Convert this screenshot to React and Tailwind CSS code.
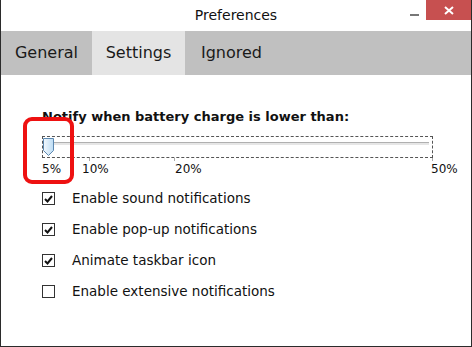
export default function App() {
  const items = [
    { label: "Enable sound notifications", checked: true },
    { label: "Enable pop-up notifications", checked: true },
    { label: "Animate taskbar icon", checked: true },
    { label: "Enable extensive notifications", checked: false },
  ];
  const font = { fontFamily: '"DejaVu Sans", Verdana, sans-serif' };
  return (
    <div className="w-[472px] h-[347px] bg-white border-x border-b border-[#2b2b2b] flex flex-col relative overflow-hidden" style={font}>
      <div className="h-[31px] flex items-center justify-center relative">
        <span className="text-[14px] text-[#111]">Preferences</span>
        <div className="absolute left-[409px] top-[14px] w-[9px] h-[2px] bg-[#777]" />
        <div className="absolute right-0 top-0 w-[45px] h-[20px] bg-[#c75050] flex items-center justify-center">
          <svg width="10" height="9" viewBox="0 0 10 9">
            <path d="M1 1 L9 8 M9 1 L1 8" stroke="white" strokeWidth="2" />
          </svg>
        </div>
      </div>
      <div className="h-[44px] bg-[#c0c0c0] flex text-[16px] text-[#1a1a1a]">
        <div className="w-[91px] flex items-center justify-center">General</div>
        <div className="w-[93px] bg-[#e4e4e4] flex items-center justify-center">Settings</div>
        <div className="w-[93px] flex items-center justify-center">Ignored</div>
      </div>
      <div className="pl-[41px] pt-[33px]">
        <div className="text-[13px] font-bold text-[#111] leading-[18px]">Notify when battery charge is lower than:</div>
        <div className="relative w-[391px] h-[22px] mt-[10px] border border-dashed border-[#555]">
          <div className="absolute left-[3px] right-[3px] top-[5px] h-[3px] bg-[#e6e6e6] border-t border-[#b0b0b0]" />
          <div className="absolute left-[46px] top-[21px] w-px h-[3px] bg-[#aaa]" />
          <div className="absolute left-[131px] top-[21px] w-px h-[3px] bg-[#aaa]" />
          <div className="absolute left-[389px] top-[21px] w-px h-[3px] bg-[#aaa]" />
          <svg className="absolute left-0 top-[1px]" width="11" height="18" viewBox="0 0 11 18">
            <defs>
              <linearGradient id="g" x1="0" x2="1" y1="0" y2="0">
                <stop offset="0" stopColor="#f2f8fd" />
                <stop offset="1" stopColor="#bcdcf4" />
              </linearGradient>
            </defs>
            <path d="M0.5 0.5 H10.5 V12.5 L5.5 17.5 L0.5 12.5 Z" fill="url(#g)" stroke="#5c88b0" />
          </svg>
        </div>
        <div className="relative h-[16px] mt-[3px] text-[12px] text-[#111] leading-[16px]">
          <span className="absolute left-0">5%</span>
          <span className="absolute left-[40px]">10%</span>
          <span className="absolute left-[133px]">20%</span>
          <span className="absolute left-[389px]">50%</span>
        </div>
        <div className="flex flex-col gap-[18px] mt-[15px]">
          {items.map((it) => (
            <div key={it.label} className="flex items-center h-[13px]">
              <div className="w-[13px] h-[13px] border border-[#333] bg-white flex items-center justify-center">
                {it.checked && (
                  <svg width="9" height="8" viewBox="0 0 9 8">
                    <path d="M1 4 L3.5 6.5 L8 1" stroke="#111" strokeWidth="2" fill="none" />
                  </svg>
                )}
              </div>
              <span className="ml-[17px] text-[13.5px] text-[#111]">{it.label}</span>
            </div>
          ))}
        </div>
      </div>
      <div className="absolute left-[22px] top-[117px] w-[51px] h-[67px] border-[4px] border-[#ee1111] rounded-[9px]" />
    </div>
  );
}
